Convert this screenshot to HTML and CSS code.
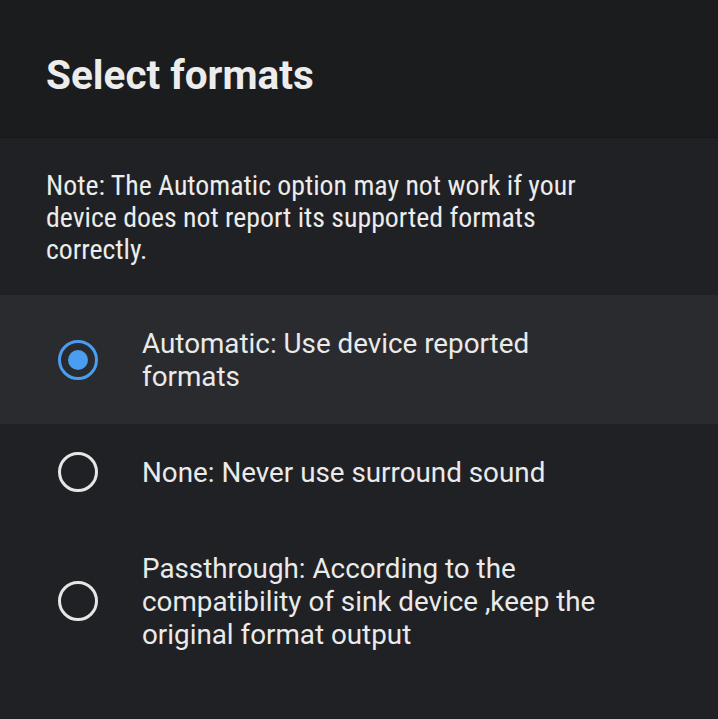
FILE: index.html
```html
<!DOCTYPE html>
<html>
<head>
<meta charset="utf-8">
<link rel="stylesheet" href="styles.css">
</head>
<body>
<div class="dialog">
  <header class="header">
    <h1 class="title">Select formats</h1>
  </header>
  <div class="content">
    <p class="note">Note: The Automatic option may not work if your device does not report its supported formats correctly.</p>
    <ul class="options">
      <li class="option selected">
        <span class="radio checked"></span>
        <span class="label">Automatic: Use device reported formats</span>
      </li>
      <li class="option">
        <span class="radio"></span>
        <span class="label">None: Never use surround sound</span>
      </li>
      <li class="option last">
        <span class="radio"></span>
        <span class="label">Passthrough: According to the compatibility of sink device ,keep the original format output</span>
      </li>
    </ul>
  </div>
</div>
</body>
</html>
```
FILE: styles.css
```css
html, body {
  margin: 0;
  padding: 0;
  background: #202124;
}
.dialog {
  width: 718px;
  height: 719px;
  display: flex;
  flex-direction: column;
  background: #202124;
  font-family: Roboto, "Noto Sans", sans-serif;
  color: #e8e8e8;
}
.header {
  height: 138px;
  flex: none;
  background: #1b1c1e;
  border-bottom: 1px solid #17181a;
  box-sizing: border-box;
  padding: 12px 46px 0 46px;
  display: flex;
  align-items: center;
}
.title {
  margin: 0;
  font-size: 40.5px;
  font-weight: 700;
  color: #ececec;
}
.content {
  flex: 1;
  display: flex;
  flex-direction: column;
}
.note {
  margin: 0;
  padding: 32px 46px 29px 46px;
  font-family: "Roboto Condensed", "Liberation Sans Narrow", "DejaVu Sans Condensed", sans-serif;
  font-stretch: condensed;
  font-size: 27.8px;
  line-height: 32px;
  color: #ececec;
  max-width: 560px;
}
.options {
  list-style: none;
  margin: 0;
  padding: 0;
}
.option {
  display: flex;
  align-items: center;
  padding: 0 96px 0 58px;
  height: 96px;
  gap: 44px;
  box-sizing: border-box;
}
.option.selected {
  background: #2a2b2e;
  height: 129px;
}
.option.last {
  height: 162px;
}
.radio {
  flex: none;
  width: 34px;
  height: 34px;
  border: 3px solid #e6e6e6;
  border-radius: 50%;
  box-sizing: content-box;
  display: flex;
  align-items: center;
  justify-content: center;
}
.radio.checked {
  border-color: #4a9df0;
}
.radio.checked::after {
  content: "";
  width: 20px;
  height: 20px;
  border-radius: 50%;
  background: #4a9df0;
}
.label {
  font-size: 27.8px;
  line-height: 33px;
  color: #eaeaea;
}
```
